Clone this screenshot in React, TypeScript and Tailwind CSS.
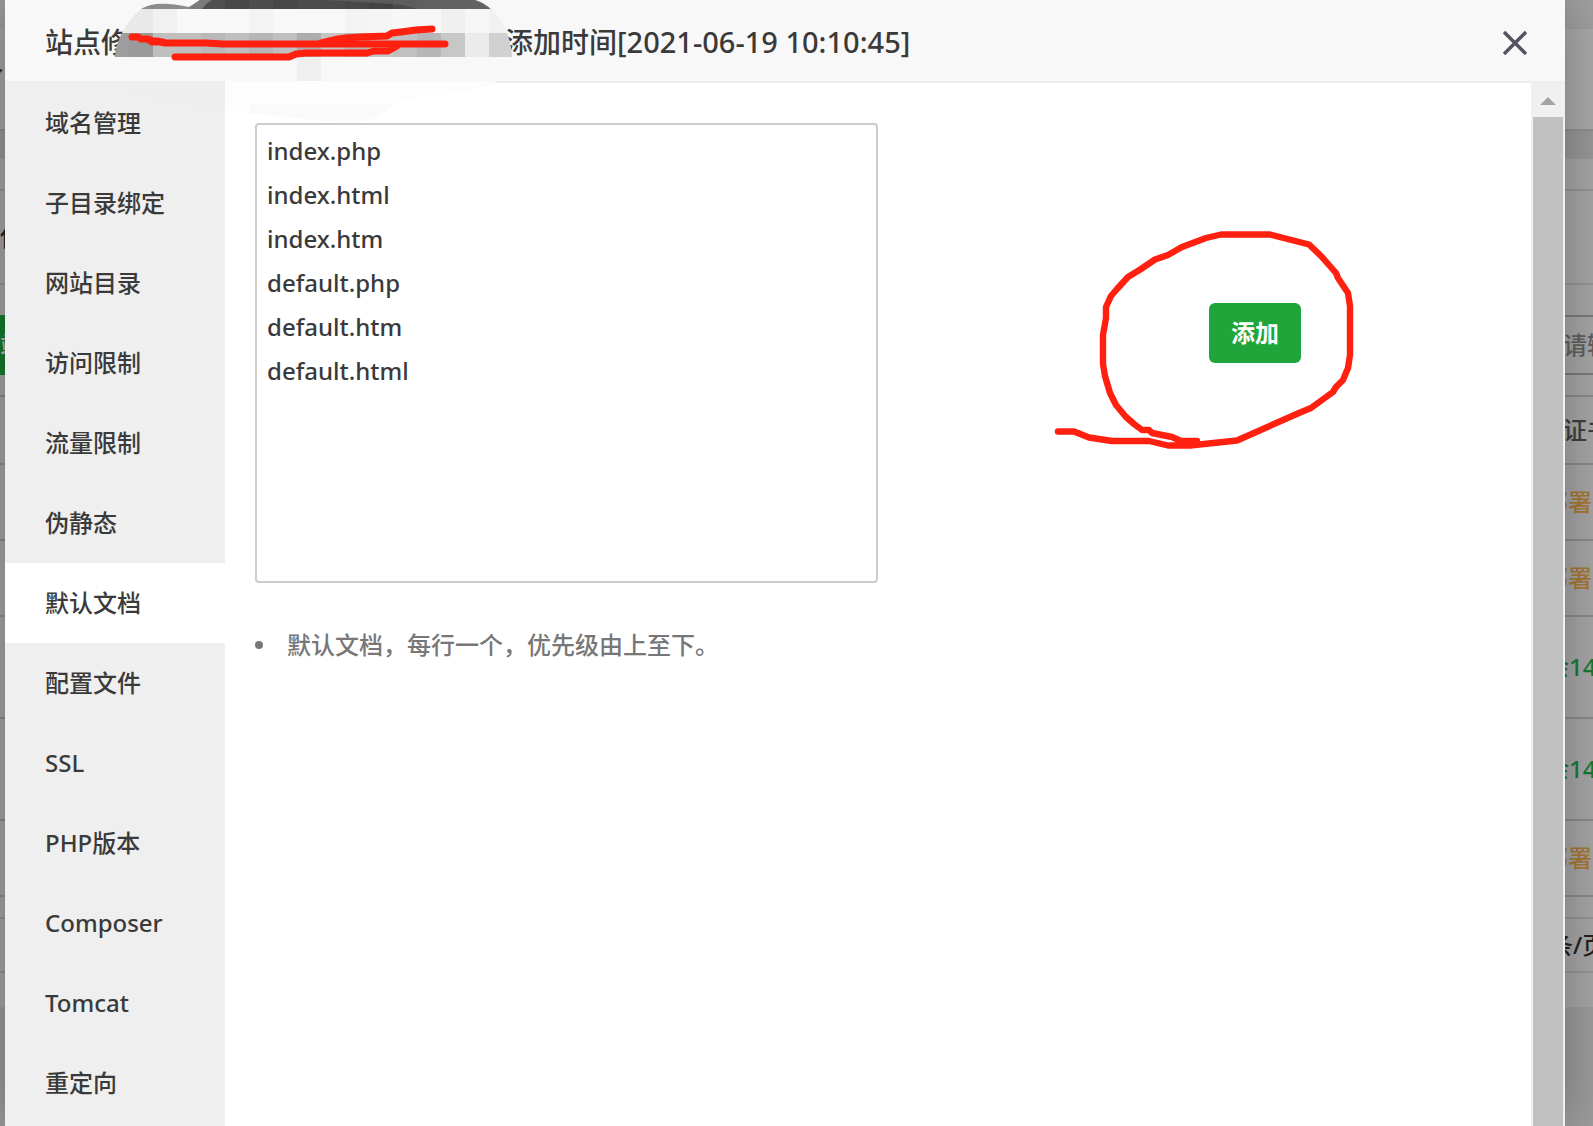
import React, { useState } from "react";

const MENU = [
  "域名管理",
  "子目录绑定",
  "网站目录",
  "访问限制",
  "流量限制",
  "伪静态",
  "默认文档",
  "配置文件",
  "SSL",
  "PHP版本",
  "Composer",
  "Tomcat",
  "重定向",
];

const DOCUMENTS = "index.php\nindex.html\nindex.htm\ndefault.php\ndefault.htm\ndefault.html";

/* Visible slice of the site list on the left of the dialog */
function LeftPage() {
  return (
    <div className="flex w-[5px] shrink-0 flex-col overflow-hidden whitespace-nowrap bg-[#a3a3a3] text-2xl" aria-hidden="true">
      <div className="h-[29px] bg-[#9d9d9d]" />
      <div className="flex h-[102px] items-center justify-end border-b-2 border-[#8a8a8a] text-[#3a3a3a]">
        <span>了</span>
      </div>
      <div className="h-7 bg-[#959595]" />
      <div className="h-8 border-b-2 border-[#929292]" />
      <div className="flex h-[94px] items-center border-b-2 border-[#929292] text-[#222]">
        <span>使</span>
      </div>
      <div className="h-[30px]" />
      <div className="flex h-[60px] items-center bg-[#157a2b] text-[#b5b5b5]">
        <span>站</span>
      </div>
      <div className="h-[22px] border-b-2 border-[#8a8a8a]" />
      <div className="h-[68px] border-b-2 border-[#8a8a8a]" />
      <div className="h-[76px] border-b-2 border-[#8a8a8a]" />
      <div className="h-[76px] border-b-2 border-[#8a8a8a]" />
      <div className="h-[102px] border-b-2 border-[#8a8a8a]" />
      <div className="h-[102px] border-b-2 border-[#8a8a8a]" />
      <div className="h-[76px] border-b-2 border-[#8a8a8a]" />
      <div className="h-[22px] border-b-2 border-[#8f8f8f]" />
      <div className="h-[54px] border-b-2 border-[#8f8f8f]" />
      <div className="h-[34px]" />
      <div className="flex-1 bg-[#999]" />
    </div>
  );
}

/* Visible slice of the site list on the right of the dialog */
function RightPage() {
  return (
    <div className="flex w-7 shrink-0 flex-col overflow-hidden whitespace-nowrap bg-[#a6a6a6] text-2xl">
      <div className="h-[29px] bg-[#a0a0a0]" />
      <div className="h-[102px] border-b-2 border-[#8f8f8f] bg-[#a9a9a9]" />
      <div className="h-7 bg-[#989898]" />
      <div className="h-8 border-b-2 border-[#959595]" />
      <div className="h-[94px] border-b-2 border-[#959595]" />
      <div className="h-8 border-b-2 border-[#7c7c7c]" />
      <div className="flex h-[58px] items-center border-b-2 border-[#7c7c7c] text-[#606060]">
        <span className="-ml-0.5">请输</span>
      </div>
      <div className="h-[22px] border-b-2 border-[#8a8a8a]" />
      <div className="flex h-[68px] items-center border-b-2 border-[#8a8a8a] text-[#3f3f3f]">
        <span className="-ml-0.5">证书</span>
      </div>
      <div className="flex h-[76px] items-center justify-end border-b-2 border-[#8a8a8a] pr-px text-[#a87836]">
        <span>部署</span>
      </div>
      <div className="flex h-[76px] items-center justify-end border-b-2 border-[#8a8a8a] pr-px text-[#a87836]">
        <span>部署</span>
      </div>
      <div className="flex h-[102px] items-center border-b-2 border-[#8a8a8a] text-[#177a34]">
        <span className="-ml-5">余14</span>
      </div>
      <div className="flex h-[102px] items-center border-b-2 border-[#8a8a8a] text-[#177a34]">
        <span className="-ml-5">余14</span>
      </div>
      <div className="flex h-[76px] items-center justify-end border-b-2 border-[#8a8a8a] pr-px text-[#a87836]">
        <span>部署</span>
      </div>
      <div className="h-[22px] border-b-2 border-[#959595]" />
      <div className="flex h-[54px] items-center border-b-2 border-[#959595] text-[#222]">
        <span className="-ml-4">条/页</span>
      </div>
      <div className="h-[34px]" />
      <div className="flex-1 bg-[#9c9c9c]" />
    </div>
  );
}

const UPPER = [
  [105, 24, "#eaeaea"], [129, 24, "#e9e9e9"], [153, 24, "#f1f1f1"], [177, 72, "#f8f8f8"],
  [249, 24, "#f3f3f3"], [273, 72, "#f8f8f8"], [345, 24, "#f3f3f3"], [369, 24, "#f5f5f5"],
  [393, 48, "#f7f7f7"], [441, 24, "#f0f0f0"], [465, 24, "#f6f6f6"], [489, 24, "#f1f1f1"],
] as const;

const MIDDLE = [
  [105, 24, "#9d9d9d"], [129, 24, "#9a9a9a"], [153, 48, "#bfbfbf"], [201, 24, "#b8b8b8"],
  [225, 24, "#bfbfbf"], [249, 24, "#b6b6b6"], [273, 24, "#c0c0c0"], [297, 24, "#adadad"],
  [321, 24, "#c5c5c5"], [345, 24, "#b5b5b5"], [369, 24, "#c5c5c5"], [393, 24, "#c0c0c0"],
  [417, 24, "#b6b6b6"], [441, 24, "#c7c7c7"], [465, 24, "#ebebeb"], [489, 24, "#d0d0d0"],
] as const;

const TOP = [
  [141, 57, "#8c8c8c"], [198, 27, "#4f4f4f"], [225, 24, "#484848"], [249, 24, "#4e4e4e"],
  [273, 24, "#484848"], [297, 48, "#4c4c4c"], [345, 24, "#484848"], [369, 24, "#434343"],
  [393, 24, "#4c4c4c"], [417, 24, "#575757"], [441, 24, "#606060"], [465, 24, "#656565"],
  [489, 23, "#777777"],
] as const;

/* Mosaic and pen strokes hiding the site name */
function Redaction() {
  return (
    <svg className="pointer-events-none absolute left-[100px] top-0 z-10" width="415" height="125" viewBox="105 0 415 125" aria-hidden="true">
      <defs>
        <clipPath id="blob">
          <path d="M115 57 C116 40 126 22 141 9 C152 3 164 2 189 7 L200 0 H475 C500 8 511 34 512 57 Z" />
        </clipPath>
      </defs>
      <path d="M225 81 H497 C480 90 460 94 430 95 C412 98 402 102 393 106 H249 L225 105 Z" fill="#fdfdfd" />
      <path d="M249 105 H393 C382 118 366 122 350 122 C320 122 285 117 249 113 Z" fill="#fafafa" />
      <path d="M112 81 H225 V105 H200 C165 102 135 94 112 81 Z" fill="#eeeeee" />
      <rect x="297" y="57" width="24" height="24" fill="#efefef" />
      <g clipPath="url(#blob)" shapeRendering="crispEdges">
        {TOP.map(([x, w, c]) => <rect key={x} x={x} y={0} width={w} height={9} fill={c} />)}
        {UPPER.map(([x, w, c]) => <rect key={x} x={x} y={9} width={w} height={24} fill={c} />)}
        {MIDDLE.map(([x, w, c]) => <rect key={x} x={x} y={33} width={w} height={24} fill={c} />)}
      </g>
      <path d="M190 7 L200 0 H212 Q206 3 202 9 H190 Z" fill="#7b7b7b" />
      <path d="M325 0 L393 4 Q407 5 416 9 H478 L489 9 L475 0 Z" fill="#636363" opacity="0.75" />
      <g fill="none" stroke="#ff2010" strokeWidth="7" strokeLinecap="round" strokeLinejoin="round">
        <path d="M132 37 H138 L141 39 H148 L152 41 H158 L164 43 H206 L223 44 H445" />
        <path d="M149 40 L152 42 L163 42" />
        <path d="M321 43 L338 39 L346 38 L361 37 L387 36 L392 33 L401 32 L416 30 L432 29" />
        <path d="M175 57 H289 L296 54 L306 53 H367 L374 51 H388 L397 46" />
      </g>
    </svg>
  );
}

/* Hand-drawn ring around the add button */
function Ring() {
  return (
    <svg className="pointer-events-none absolute -left-[159px] -top-[78px]" width="310" height="230" viewBox="1050 225 310 230" fill="none" stroke="#ff2010" strokeWidth="6.4" strokeLinecap="round" strokeLinejoin="round" aria-hidden="true">
      <path d="M1058 431.500 H1074 L1089 437.500 L1112 441 H1149 L1168 445.500 H1190 L1237 440.500 L1299 413 L1311 408 L1333 392 L1336 387 L1343 380 L1348 368 L1350 355 V306 L1348 293 L1338 278 L1336 273 L1321 256 L1309 244.500 L1270 234.500 H1221 L1206 238 L1182 247 L1168 255 L1155 259.500 L1141 269 L1128 277 L1117 289 L1111 296 L1106 307 V318 L1103 335 V364 L1105 376 L1110 393 L1116 405 L1126 417 L1134 424 L1142 430 H1149 L1152 433 L1172 437 L1181 441 H1197" />
    </svg>
  );
}

export default function App() {
  const [active, setActive] = useState("默认文档");
  const [docs, setDocs] = useState(DOCUMENTS);
  return (
    <div className="flex h-screen overflow-hidden bg-[#a3a3a3] font-['Noto_Sans','Noto_Sans_CJK_SC',sans-serif] font-medium text-[#3a3a3a]">
      <LeftPage />
      <section role="dialog" aria-label="站点修改" className="relative z-10 flex min-w-0 flex-1 flex-col bg-white shadow-[0_0_50px_rgba(0,0,0,0.3)]">
        <header className="flex h-[83px] shrink-0 items-center justify-between border-b-2 border-[#eee] bg-[#f8f8f8] pl-10 pr-9 pt-0.5">
          <h1 className="flex whitespace-nowrap text-[28px] font-medium leading-10">
            <span className="w-[460px]">站点修</span>
            <span>添加时间</span>
            <span className="text-[29px]">[2021-06-19 10:10:45]</span>
          </h1>
          <button type="button" aria-label="关闭" className="mt-0.5 flex size-7 items-center justify-center">
            <svg width="28" height="28" viewBox="0 0 28 28" fill="none" stroke="#55535f" strokeWidth="3.4" aria-hidden="true">
              <path d="M3 3 L25 25 M25 3 L3 25" />
            </svg>
          </button>
        </header>
        <Redaction />
        <div className="flex min-h-0 flex-1">
          <nav className="flex w-[220px] shrink-0 flex-col overflow-hidden bg-[#efefef]">
            {MENU.map((item) => (
              <button
                key={item}
                type="button"
                onClick={() => setActive(item)}
                className={
                  item === active
                    ? "h-20 shrink-0 bg-white pl-10 text-left text-2xl"
                    : "h-20 shrink-0 pl-10 text-left text-2xl"
                }
              >
                {item}
              </button>
            ))}
          </nav>
          <main className="min-w-0 flex-1 pl-[30px] pt-10">
            <div className="flex items-start justify-between pr-[230px]">
              <textarea
                aria-label="默认文档"
                value={docs}
                onChange={(e) => setDocs(e.target.value)}
                className="block h-[460px] w-[623px] resize-none rounded border-2 border-[#ccc] bg-white px-[10px] py-1 text-2xl leading-[44px] outline-none"
              />
              <div className="relative mt-[180px]">
                <button type="button" className="block h-[60px] w-[92px] rounded-md bg-[#20a53a] text-2xl font-bold text-white">
                  添加
                </button>
                <Ring />
              </div>
            </div>
            <ul className="mt-10 text-2xl leading-[44px] text-[#777]">
              <li className="flex items-center gap-6">
                <span className="size-2 rounded-full bg-[#777]" />
                默认文档，每行一个，优先级由上至下。
              </li>
            </ul>
          </main>
          <div className="flex w-[34px] shrink-0 flex-col bg-[#f0f0f0]" aria-hidden="true">
            <div className="flex h-[34px] items-center justify-center pt-0.5">
              <svg width="16" height="8" viewBox="0 0 16 8" fill="#a3a3a3">
                <path d="M0 8 L8 0 L16 8 Z" />
              </svg>
            </div>
            <div className="mx-0.5 flex-1 bg-[#c1c1c1]" />
          </div>
        </div>
      </section>
      <RightPage />
    </div>
  );
}
